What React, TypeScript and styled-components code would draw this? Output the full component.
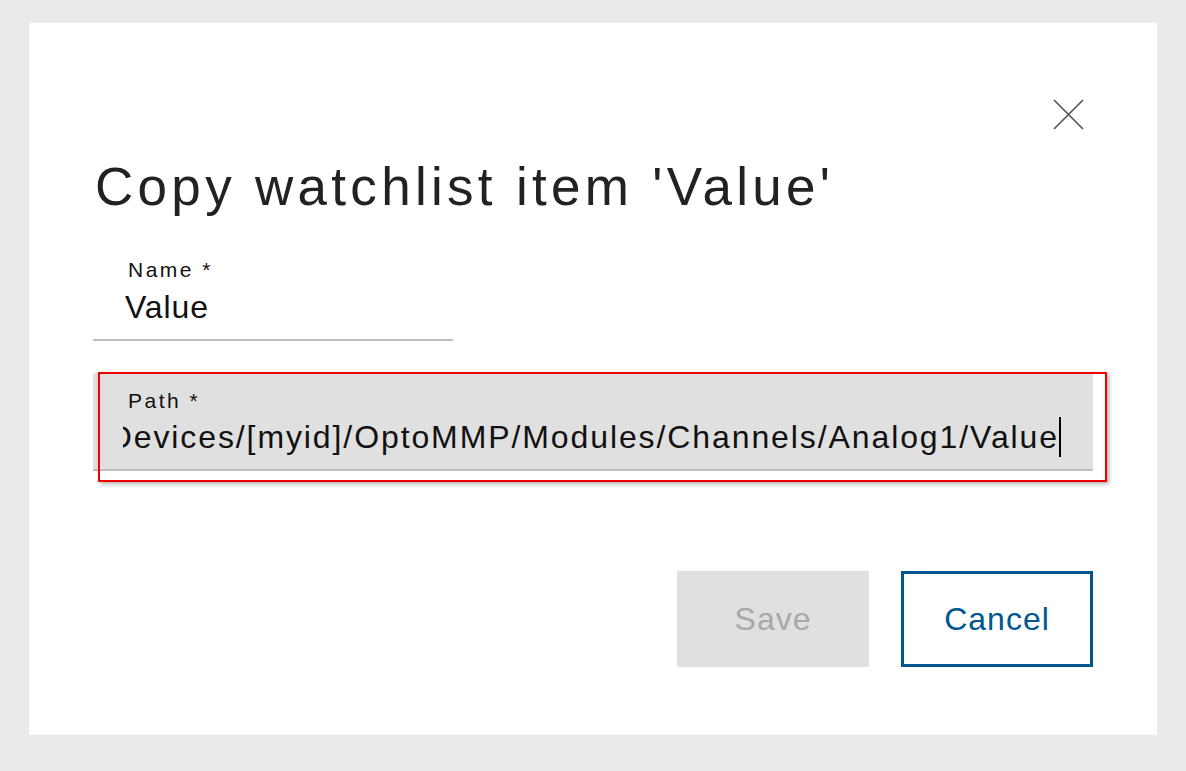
import React from "react";
import styled, { createGlobalStyle } from "styled-components";

const GlobalStyle = createGlobalStyle`
  html, body {
    margin: 0;
    padding: 0;
    background: #eaeaea;
    font-family: "Liberation Sans", Arial, sans-serif;
  }
`;

const Page = styled.div`
  box-sizing: border-box;
  width: 1186px;
  height: 771px;
  padding: 23px 29px 36px 29px;
  background: #eaeaea;
`;

const Dialog = styled.div`
  box-sizing: border-box;
  width: 1128px;
  height: 712px;
  background: #ffffff;
  padding: 76px 64px 68px 64px;
  display: flex;
  flex-direction: column;
`;

const Header = styled.div`
  display: flex;
  justify-content: flex-end;
  padding-right: 9px;
`;

const CloseButton = styled.button`
  width: 31px;
  height: 31px;
  padding: 0;
  border: none;
  background: transparent;
  cursor: pointer;
  display: flex;
`;

const Title = styled.h1`
  margin: 25px 0 23px 2px;
  font-size: 53px;
  line-height: 64px;
  font-weight: 400;
  letter-spacing: 4.3px;
  color: #222222;
`;

const Field = styled.div<{ $filled?: boolean; $width?: number }>`
  position: relative;
  box-sizing: border-box;
  width: ${(p) => (p.$width ? `${p.$width}px` : "100%")};
  padding: 15px 32px 12px 30px;
  background: ${(p) => (p.$filled ? "#e0e0e0" : "transparent")};
  border-bottom: 2px solid #bfbfbf;
`;

const Label = styled.div`
  margin-left: 5px;
  font-size: 21px;
  line-height: 26px;
  letter-spacing: 2.5px;
  color: #111111;
`;

const ValueBox = styled.div`
  margin-top: 3px;
  height: 40px;
  display: flex;
  justify-content: flex-end;
  align-items: center;
  overflow: hidden;
  white-space: nowrap;
`;

const NameValue = styled.div`
  margin-top: 4px;
  margin-left: 2px;
  font-size: 32px;
  line-height: 40px;
  letter-spacing: 0.9px;
  color: #111111;
`;

const ValueText = styled.span`
  flex: none;
  font-size: 32px;
  line-height: 40px;
  letter-spacing: 1.9px;
  color: #111111;
`;

const Caret = styled.span`
  flex: none;
  width: 2px;
  height: 40px;
  background: #000000;
`;

const Highlight = styled.div`
  position: absolute;
  left: 5px;
  top: -1px;
  right: -14px;
  bottom: -13px;
  border: 2px solid #ee0000;
  box-shadow: 2px 2px 4px rgba(0, 0, 0, 0.3);
  pointer-events: none;
`;

const Gap = styled.div<{ $h: number }>`
  height: ${(p) => p.$h}px;
  flex: none;
`;

const Actions = styled.div`
  margin-top: auto;
  display: flex;
  justify-content: flex-end;
  gap: 32px;
`;

const Button = styled.button<{ $variant: "disabled" | "secondary" }>`
  box-sizing: border-box;
  width: 192px;
  height: 96px;
  font-family: "Liberation Sans", Arial, sans-serif;
  font-size: 32px;
  letter-spacing: 1px;
  cursor: pointer;
  background: ${(p) => (p.$variant === "disabled" ? "#e0e0e0" : "#ffffff")};
  color: ${(p) => (p.$variant === "disabled" ? "#a8a8a8" : "#005691")};
  border: ${(p) => (p.$variant === "disabled" ? "none" : "3px solid #005691")};
`;

const CloseIcon = () => (
  <svg width="31" height="31" viewBox="0 0 31 31">
    <path d="M1 1 L30 30 M30 1 L1 30" stroke="#4c5259" strokeWidth="1.6" fill="none" />
  </svg>
);

export default function App() {
  return (
    <>
      <GlobalStyle />
      <Page>
        <Dialog>
          <Header>
            <CloseButton aria-label="Close">
              <CloseIcon />
            </CloseButton>
          </Header>
          <Title>Copy watchlist item 'Value'</Title>
          <Field $width={360}>
            <Label>Name *</Label>
            <NameValue>Value</NameValue>
          </Field>
          <Gap $h={32} />
          <Field $filled>
            <Label>Path *</Label>
            <ValueBox>
              <ValueText>Devices/[myid]/OptoMMP/Modules/Channels/Analog1/Value</ValueText>
              <Caret />
            </ValueBox>
            <Highlight />
          </Field>
          <Actions>
            <Button $variant="disabled" disabled>
              Save
            </Button>
            <Button $variant="secondary">Cancel</Button>
          </Actions>
        </Dialog>
      </Page>
    </>
  );
}
